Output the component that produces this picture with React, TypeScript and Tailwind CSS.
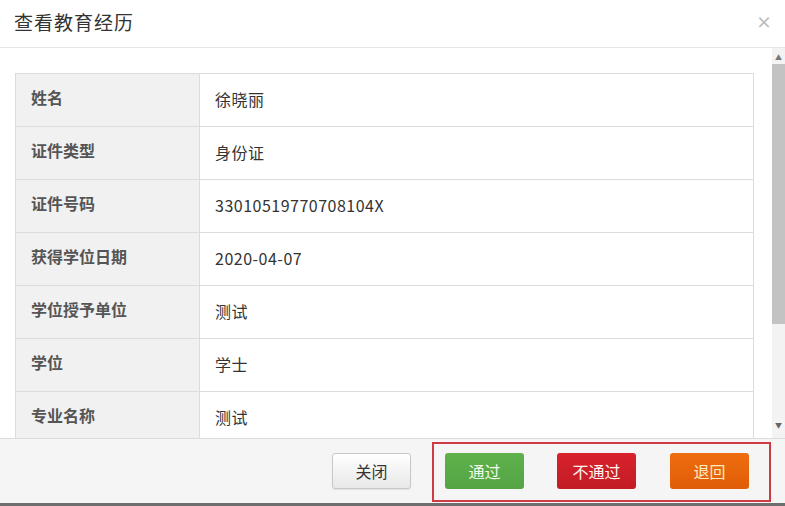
import React from "react";

const rows: [string, string][] = [
  ["姓名", "徐晓丽"],
  ["证件类型", "身份证"],
  ["证件号码", "33010519770708104X"],
  ["获得学位日期", "2020-04-07"],
  ["学位授予单位", "测试"],
  ["学位", "学士"],
  ["专业名称", "测试"],
];

const font = { fontFamily: '"Noto Sans CJK SC", "Noto Sans", sans-serif' };

export default function App() {
  return (
    <div
      className="w-[785px] h-[506px] bg-white flex flex-col overflow-hidden text-[#333]"
      style={font}
    >
      {/* header */}
      <div className="h-[48px] shrink-0 border-b border-[#e5e5e5] flex items-center justify-between pl-[14px] pr-[13px]">
        <span className="text-[19px] leading-none tracking-[1px] text-[#333] -mt-[4px]">查看教育经历</span>
        <span className="text-[16px] font-bold text-[#bdbdbd] leading-none -mt-[6px]">×</span>
      </div>

      {/* body */}
      <div className="flex-1 flex min-h-0">
        <div className="flex-1 min-h-0 overflow-hidden pt-[25px] pl-[15px] pr-[18px]">
          <div className="border border-[#dcdcdc] w-[739px]">
            {rows.map(([k, v]) => (
              <div key={k} className="flex h-[53px] border-b border-[#dcdcdc]">
                <div className="w-[184px] shrink-0 bg-[#f1f1f1] border-r border-[#dcdcdc] pl-[15px] pt-[11px] text-[16px] font-bold text-[#555]">
                  {k}
                </div>
                <div className="flex-1 pl-[15px] pt-[13px] text-[16px] tracking-[0.5px] text-[#333]">{v}</div>
              </div>
            ))}
          </div>
        </div>
        {/* scrollbar */}
        <div className="w-[13px] shrink-0 bg-[#f3f3f3] flex flex-col items-center">
          <div className="h-[14px] flex items-center justify-center text-[7px] text-[#777] leading-none pt-[4px]">▲</div>
          <div className="h-[260px] w-[13px] bg-[#c3c3c3] mt-[2px]" />
          <div className="flex-1" />
          <div className="h-[16px] flex items-start justify-center text-[7px] text-[#666] leading-none">▼</div>
        </div>
      </div>

      {/* footer */}
      <div className="h-[68px] shrink-0 bg-[#f5f5f5] border-t border-[#dcdcdc] border-b-[3px] border-b-[#6e6e6e] flex items-start justify-end pr-[14px] pt-[3px]">
        <button className="mt-[11px] w-[79px] h-[36px] rounded-[3px] border border-[#c8c8c8] bg-gradient-to-b from-white to-[#e8e8e8] text-[16px] text-[#333] shadow-[0_1px_1px_rgba(0,0,0,0.08)]">
          关闭
        </button>
        <div className="ml-[21px] h-[60px] border-2 border-[#cc3a44] flex items-start pl-[11px] pr-[20px] pt-[9px] gap-[33px]">
          <button className="w-[79px] h-[36px] rounded-[3px] bg-gradient-to-b from-[#5fb24c] to-[#54a444] text-[16px] text-[#f2fbe9]">
            通过
          </button>
          <button className="w-[79px] h-[36px] rounded-[3px] bg-gradient-to-b from-[#d8222c] to-[#c21c25] text-[16px] text-[#fff4f0]">
            不通过
          </button>
          <button className="w-[79px] h-[36px] rounded-[3px] bg-gradient-to-b from-[#ef6d0e] to-[#e05d08] text-[16px] text-[#fbebc0] ml-[1px]">
            退回
          </button>
        </div>
      </div>
    </div>
  );
}
